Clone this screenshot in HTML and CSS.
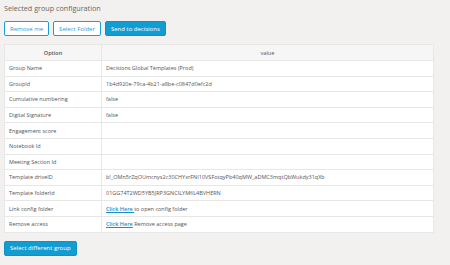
FILE: index.html
```html
<!DOCTYPE html>
<html>
<head>
<meta charset="utf-8">
<link rel="stylesheet" href="styles.css">
</head>
<body>
<div class="page">
  <h1 class="title">Selected group configuration</h1>
  <div class="actions">
    <button class="btn btn-outline">Remove me</button>
    <button class="btn btn-outline">Select Folder</button>
    <button class="btn btn-primary">Send to decisions</button>
  </div>
  <table class="config">
    <thead>
      <tr><th class="col-opt">Option</th><th class="col-val">value</th></tr>
    </thead>
    <tbody>
      <tr><td>Group Name</td><td>Decisions Global Templates (Prod)</td></tr>
      <tr><td>GroupId</td><td>1b4d920e-79ca-4b21-a8be-c0847d0efc2d</td></tr>
      <tr><td>Cumulative numbering</td><td>false</td></tr>
      <tr><td>Digital Signature</td><td>false</td></tr>
      <tr><td>Engagement score</td><td></td></tr>
      <tr><td>Notebook Id</td><td></td></tr>
      <tr><td>Meeting Section Id</td><td></td></tr>
      <tr><td>Template driveID</td><td>b!_OMn5rZqOUmcnys2c30CHYxrFNI10VSFotqyPb40qMW_aDMC3mqtQbWukdy31qXb</td></tr>
      <tr><td>Template folderId</td><td>01GG74T2WD5YB5JRP3GNCILYM6L4BVHERN</td></tr>
      <tr><td>Link config folder</td><td><a href="#" class="link">Click Here </a>to open config folder</td></tr>
      <tr><td>Remove access</td><td><a href="#" class="link">Click Here</a> Remove access page</td></tr>
    </tbody>
  </table>
  <button class="btn btn-primary btn-lg">Select different group</button>
</div>
</body>
</html>
```
FILE: styles.css
```css
html, body {
  margin: 0;
  padding: 0;
  background: #f2f1f0;
}
body {
  font-family: "Open Sans", "Liberation Sans", sans-serif;
  color: #555;
}
.page {
  padding: 2px 4px 0;
  width: 430px;
}
.title {
  margin: 0;
  font-size: 7.2px;
  font-weight: 400;
  line-height: 12px;
  color: #666;
}
.actions {
  display: flex;
  gap: 4px;
  margin-top: 7px;
}
.btn {
  display: block;
  font-family: "Open Sans", "Liberation Sans", sans-serif;
  font-size: 6px;
  height: 15px;
  padding: 0 5px;
  border-radius: 2px;
  border: 1px solid #1ba0d3;
  cursor: pointer;
}
.btn-outline {
  background: #fff;
  color: #1ba0d3;
}
.btn-primary {
  background: #129dd2;
  color: #fff;
  border-color: #0f91c4;
}
.config {
  width: 430px;
  margin-top: 8px;
  border-collapse: collapse;
  background: #fff;
  font-size: 5.5px;
  color: #555;
}
.config th, .config td {
  border: 1px solid #e7e7e7;
  height: 15.6px;
  padding: 0 4px;
  text-align: left;
  box-sizing: border-box;
}
.config th {
  background: #f6f6f6;
  text-align: center;
  font-weight: 600;
  height: 16px;
  color: #555;
}
.config .col-val {
  font-weight: 400;
}
.config .col-opt {
  width: 97px;
}
.link {
  color: #1a8ccc;
  text-decoration: underline;
  font-weight: 600;
}
.btn-lg {
  margin-top: 8px;
}
```
